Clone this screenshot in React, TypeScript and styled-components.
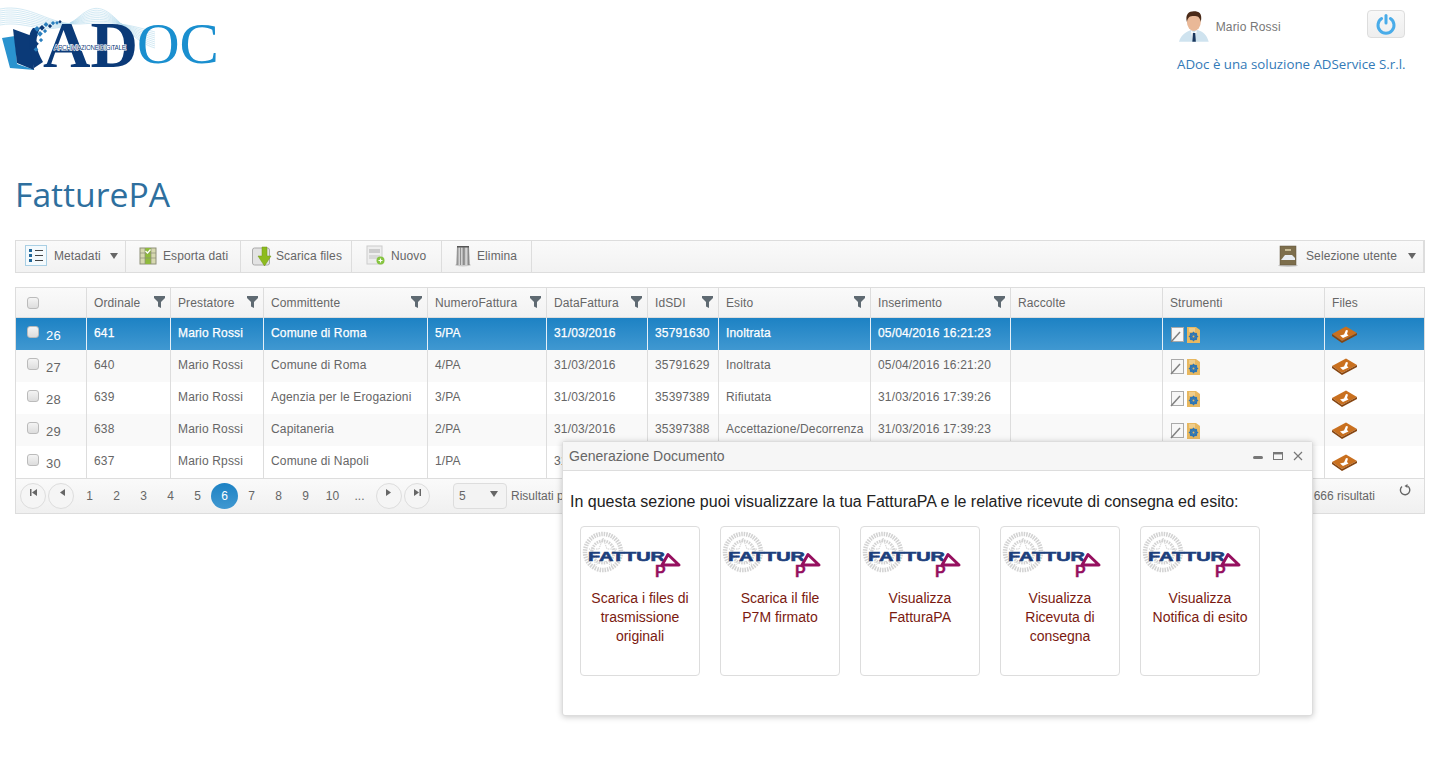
import React from "react";
import styled, { createGlobalStyle } from "styled-components";

const Global = createGlobalStyle`
  html, body { margin: 0; padding: 0; background: #fff; }
  body { font-family: "Liberation Sans", Arial, sans-serif; font-size: 12px; color: #555; overflow: hidden; }
  * { box-sizing: border-box; }
`;

const Page = styled.div`
  position: relative;
  width: 1440px;
  height: 775px;
  overflow: hidden;
  padding: 0 15px 0 15px;
`;

const Header = styled.header`
  display: flex;
  justify-content: space-between;
  margin-left: -15px;
  height: 170px;
`;

const LogoBox = styled.div`
  width: 222px;
  height: 76px;
`;

const UserBox = styled.div`
  width: 228px;
  margin-right: 20px;
  padding-top: 9px;
`;

const UserRow = styled.div`
  display: flex;
  align-items: center;
  height: 34px;
  padding-left: 1px;
`;

const UserName = styled.span`
  margin-left: 6px;
  font-size: 12px;
  letter-spacing: 0.15px;
  color: #777;
  width: 153px;
  position: relative;
  top: 1px;
`;

const PowerButton = styled.button`
  width: 38px;
  height: 28px;
  padding: 0;
  margin-top: -4px;
  display: flex;
  align-items: center;
  justify-content: center;
  border: 1px solid #ddd;
  border-radius: 4px;
  background: linear-gradient(#f8f8f8, #eee);
`;

const Slogan = styled.div`
  margin-top: 9px;
  font-family: "Open Sans", sans-serif;
  font-size: 13.3px;
  line-height: 24px;
  color: #337ab7;
  white-space: nowrap;
`;

const Title = styled.h1`
  margin: 0;
  height: 70px;
  padding-top: 1px;
  font-family: "Open Sans", sans-serif;
  font-weight: 400;
  font-size: 33.7px;
  line-height: 46px;
  color: #2e6f9e;
`;

const Toolbar = styled.div`
  display: flex;
  align-items: stretch;
  width: 1410px;
  height: 33px;
  border: 1px solid #ddd;
  border-right-width: 2px;
  background: linear-gradient(#fafafa, #f2f2f2);
`;

const ToolItem = styled.div<{ $w: number; $pad?: number; $gap?: number; $right?: boolean }>`
  display: flex;
  align-items: center;
  width: ${(p) => p.$w}px;
  padding-left: ${(p) => p.$pad ?? 9}px;
  padding-bottom: 2px;
  gap: ${(p) => p.$gap ?? 6}px;
  font-size: 12px;
  letter-spacing: 0.1px;
  color: #666;
  border-right: ${(p) => (p.$right ? "none" : "1px solid #ddd")};
  margin-left: ${(p) => (p.$right ? "auto" : "0")};
`;

const Caret = styled.span<{ $up?: number }>`
  width: 0;
  height: 0;
  margin-left: 3px;
  margin-top: ${(p) => -(p.$up ?? 0)}px;
  border-left: 4px solid transparent;
  border-right: 4px solid transparent;
  border-top: 6px solid #666;
`;

const Grid = styled.div`
  width: 1410px;
  margin-top: 14px;
  border: 1px solid #ddd;
  border-top-width: 1px;
`;

const Table = styled.table`
  width: 100%;
  table-layout: fixed;
  border-collapse: separate;
  border-spacing: 0;
`;

const Th = styled.th<{ $first?: boolean }>`
  height: 30px;
  padding: 0 7px;
  padding-left: ${(p) => (p.$first ? 11 : 7)}px;
  text-align: left;
  font-weight: 400;
  font-size: 12px;
  letter-spacing: 0.12px;
  color: #666;
  background: linear-gradient(#fafafa, #f2f2f2);
  border-left: 1px solid #ddd;
  border-bottom: 1px solid #ddd;
  position: relative;
  &:first-child { border-left: 0; }
`;

const Row = styled.tr<{ $sel?: boolean; $alt?: boolean }>`
  height: 32px;
  color: ${(p) => (p.$sel ? "#fff" : "#666")};
  background: ${(p) =>
    p.$sel ? "linear-gradient(#1d82c4, #4098d1)" : p.$alt ? "#f9f9f9" : "#fff"};
  -webkit-text-stroke: ${(p) => (p.$sel ? "0.25px #fff" : "0")};
`;

const Td = styled.td<{ $sel?: boolean }>`
  padding: 0 7px 2px;
  font-size: 12px;
  letter-spacing: 0.15px;
  border-left: 1px solid ${(p) => (p.$sel ? "#e6f0f8" : "#ddd")};
  white-space: nowrap;
  overflow: hidden;
  &:first-child { border-left: 0; padding-left: 11px; }
`;

const NumCell = styled.span`
  font-size: 13px;
  margin-left: 7px;
  position: relative;
  top: 2px;
  -webkit-text-stroke: 0;
`;

const Check = styled.span<{ $lift?: number }>`
  display: inline-block;
  position: relative;
  top: ${(p) => -(p.$lift ?? 0)}px;
  width: 12px;
  height: 12px;
  border: 1px solid #bbb;
  border-radius: 3px;
  background: linear-gradient(#f4f4f4, #ddd);
  vertical-align: middle;
`;

const FilterIcon = styled.svg`
  position: absolute;
  right: 5px;
  top: 8px;
`;

const CellIcons = styled.div`
  display: flex;
  gap: 2px;
  align-items: center;
  padding-top: 2px;
`;

const Pager = styled.div`
  position: relative;
  display: flex;
  align-items: center;
  height: 35px;
  padding-left: 4px;
  background: linear-gradient(#fafafa, #f0f0f0);
  border-top: 1px solid #ddd;
  color: #666;
`;

const NavBtn = styled.span<{ $ml?: number }>`
  display: flex;
  align-items: center;
  justify-content: center;
  width: 26px;
  height: 26px;
  margin-left: ${(p) => p.$ml ?? 0}px;
  padding-bottom: 8px;
  border: 1px solid #ddd;
  border-radius: 50%;
  color: #666;
  background: #f5f5f5;
`;

const PageList = styled.div`
  display: flex;
  margin-left: 2px;
`;

const PageNum = styled.span<{ $active?: boolean }>`
  display: flex;
  align-items: center;
  justify-content: center;
  width: 27px;
  height: 26px;
  flex: none;
  font-size: 12px;
  color: ${(p) => (p.$active ? "#fff" : "#666")};
  background: ${(p) => (p.$active ? "linear-gradient(#1d82c4, #4098d1)" : "transparent")};
  border-radius: 50%;
`;

const SizeSelect = styled.span`
  display: flex;
  align-items: center;
  justify-content: space-between;
  width: 54px;
  height: 26px;
  margin-left: 23px;
  padding: 0 8px 0 5px;
  border: 1px solid #ddd;
  border-radius: 4px;
  background: #f3f3f3;
  font-size: 12px;
`;

const PagerText = styled.span`
  margin-left: 4px;
  white-space: nowrap;
`;

const PagerRight = styled.div`
  display: flex;
  align-items: center;
  gap: 24px;
  margin-left: auto;
  padding-right: 13px;
  white-space: nowrap;
`;

const RefreshIcon = styled.svg`
  margin-top: -12px;
`;

const Win = styled.div`
  position: absolute;
  left: 562px;
  top: 441px;
  width: 751px;
  height: 275px;
  background: #fff;
  border: 1px solid #ddd;
  border-radius: 3px;
  box-shadow: 0 1px 6px rgba(0, 0, 0, 0.22);
`;

const WinTitle = styled.div`
  display: flex;
  align-items: center;
  justify-content: space-between;
  height: 29px;
  padding: 0 9px 0 6px;
  background: #f6f6f6;
  border-bottom: 1px solid #ddd;
  font-size: 14px;
  color: #666;
`;

const WinActions = styled.div`
  display: flex;
  align-items: center;
  gap: 10px;
`;

const WinBody = styled.div`
  padding: 21px 7px 0;
`;

const Intro = styled.p`
  margin: 0;
  font-size: 16px;
  line-height: 20px;
  color: #222;
  white-space: nowrap;
`;

const Cards = styled.div`
  display: flex;
  gap: 20px;
  margin: 14px 0 0 10px;
`;

const Card = styled.div`
  width: 120px;
  height: 150px;
  padding-top: 1px;
  border: 1px solid #ddd;
  border-radius: 4px;
  text-align: center;
`;

const CardText = styled.div`
  margin-top: 6px;
  padding: 0 6px;
  font-size: 14px;
  line-height: 19px;
  color: #7b1a10;
`;

const Logo = () => (
  <svg width="222" height="76" viewBox="0 0 222 76">
    <g fill="none" stroke="#a9d5ea" strokeWidth="0.6" opacity="0.85">
      {[0, 2, 4, 6, 8, 10, 12, 14, 16].map((d) => (
        <path key={d} d={`M0 ${9 + d}C30 ${3 + d} 50 ${26 + d} 80 ${24 - d / 2}S120 ${22 + d} 155 ${32 + d}`} />
      ))}
    </g>
    <path d="M2 38L15 36 17 64 35 70 10 68Z" fill="#2a93cf" />
    <path d="M13 29L32 36 34 70 17 63Z" fill="#0b3a78" />
    <path d="M33 28C26 36 30 50 34 68L43 62C36 50 34 40 40 28Z" fill="#0b3a78" />
    {[[35,33,3],[37,26,3],[40,31,3],[42,25,3],[45,29,2],[46,22,2.5],[50,24,2],[53,21,2],[57,21,1.6],[36,41,3],[41,38,2],[36,47,2.4],[60,20,1.4]].map(([x,y,s],i)=>(
      <rect key={i} x={x} y={y} width={s+1} height={s+1} fill={i%3===0?"#0b3a78":"#2a7fbe"} transform={`rotate(45 ${x} ${y})`} />
    ))}
    <text x="137" y="63" fontFamily="Liberation Serif" fontSize="58" fill="#1a8fcf" textLength="82" lengthAdjust="spacingAndGlyphs">OC</text>
    <text x="43" y="67" fontFamily="Liberation Serif" fontWeight="700" fontSize="66" fill="#0b3a78" textLength="95" lengthAdjust="spacingAndGlyphs">AD</text>
    <text x="54" y="50" fontFamily="Liberation Sans" fontSize="6.5" fill="#0b3a78" stroke="#fff" strokeWidth="1.2" paintOrder="stroke" textLength="72">ARCHIVIAZIONE DIGITALE</text>
  </svg>
);

const Avatar = () => (
  <svg width="32" height="34" viewBox="0 0 32 34">
    <path d="M1 33C3 25 9 23 13 21L20 21C25 23 29 25 31 33Z" fill="#cfe3ef" />
    <path d="M13 21L16 24 19 21 17 33 15 33Z" fill="#fff" />
    <path d="M15 24H17.5L18 33H14.5Z" fill="#17365d" />
    <ellipse cx="16" cy="13" rx="7" ry="9" fill="#e9b897" />
    <path d="M9 13C7 5 11 2 16 2S25 4 23 13C22 8 20 7 16 7S10 8 9 13Z" fill="#4a2a18" />
  </svg>
);

const Power = () => (
  <svg width="22" height="22" viewBox="0 0 22 22" fill="none">
    <path d="M6.6 5.6A8 8 0 1 0 15.4 5.6" stroke="#49ace9" strokeWidth="3" strokeLinecap="round" />
    <path d="M11 2.5V10" stroke="#49ace9" strokeWidth="3" strokeLinecap="round" />
  </svg>
);

const IconMeta = () => (
  <svg width="23" height="22" viewBox="0 0 23 22">
    <rect x="0.5" y="0.5" width="21" height="20" fill="#f4fafd" stroke="#a9cfe4" />
    <rect x="4" y="4" width="3" height="3" fill="#22689a" /><rect x="4" y="9" width="3" height="3" fill="#22689a" /><rect x="4" y="14" width="3" height="3" fill="#22689a" />
    <path d="M10 5.5H18M10 10.5H18M10 15.5H18" stroke="#444" strokeWidth="1" />
  </svg>
);
const IconExport = () => (
  <svg width="18" height="18" viewBox="0 0 18 18">
    <rect x="1" y="1" width="16" height="16" fill="#d6d8b0" stroke="#8e9078" />
    <rect x="6" y="1" width="6" height="16" fill="#8fbb3c" />
    <path d="M1 6H17M1 11H17M6 1V17M12 1V17" stroke="#8e9078" strokeWidth="0.7" />
    <path d="M6.5 4L8.5 6 11.5 2.5" stroke="#fff" fill="none" strokeWidth="1.2" />
  </svg>
);
const IconDownload = () => (
  <svg width="21" height="22" viewBox="0 0 21 22">
    <rect x="0.5" y="3" width="17" height="17" rx="2" fill="#e3e3e3" stroke="#aaa" />
    <path d="M10 2H15V11H19L12.5 21 6 11H10Z" fill="#8dbb1f" stroke="#6e9614" strokeWidth="0.5" />
  </svg>
);
const IconNew = () => (
  <svg width="20" height="21" viewBox="0 0 20 21">
    <rect x="1" y="1" width="15" height="18" fill="#eee" stroke="#ccc" />
    <rect x="3" y="4" width="11" height="4" fill="#ccc" /><rect x="3" y="10" width="11" height="4" fill="#d8d8d8" />
    <circle cx="14.5" cy="15.5" r="4" fill="#86c440" />
    <path d="M14.5 13.5V17.5M12.5 15.5H16.5" stroke="#fff" strokeWidth="1.2" />
  </svg>
);
const IconTrash = () => (
  <svg width="18" height="23" viewBox="0 0 18 23">
    <defs>
      <linearGradient id="tub" x1="0" x2="1" y1="0" y2="0">
        <stop offset="0" stopColor="#777" />
        <stop offset="0.3" stopColor="#eee" />
        <stop offset="0.55" stopColor="#999" />
        <stop offset="0.75" stopColor="#ddd" />
        <stop offset="1" stopColor="#666" />
      </linearGradient>
    </defs>
    <ellipse cx="9" cy="21" rx="8" ry="1.5" fill="#ccc" />
    <path d="M3 2H15L15.5 21H2.5Z" fill="url(#tub)" />
    <path d="M3 2H15V3.5H3Z" fill="#555" />
    <path d="M6.5 3V21M10 3V21" stroke="#777" strokeWidth="0.8" />
  </svg>
);
const IconDrawer = () => (
  <svg width="20" height="22" viewBox="0 0 20 22">
    <ellipse cx="10" cy="20.5" rx="10" ry="1.5" fill="#ccc" />
    <rect x="2" y="1" width="16" height="19" fill="#7d6e4c" stroke="#5e5238" strokeWidth="0.5" />
    <rect x="7" y="4" width="6" height="2" fill="#c7bb95" />
    <path d="M3 15L7 10H14L17 13V15Z" fill="#e9edf2" />
  </svg>
);
const Filter = () => (
  <FilterIcon width="11" height="12" viewBox="0 0 11 12">
    <path d="M0 0H11V2L7 6V12L4 10.5V6L0 2Z" fill="#5f6a72" />
  </FilterIcon>
);
const IconEdit = () => (
  <svg width="15" height="17" viewBox="0 0 15 17">
    <rect x="1.5" y="1.5" width="12" height="14" fill="#f7f7f7" stroke="#aaa" />
    <path d="M1 16L10 6" stroke="#808080" strokeWidth="1.5" />
  </svg>
);
const IconGear = () => (
  <svg width="13" height="17" viewBox="0 0 13 17">
    <path d="M0 1H9L13 4V17H0Z" fill="#e8b860" />
    <path d="M2 3H8M2 5H8" stroke="#f6e2b5" />
    <circle cx="6.5" cy="10.5" r="3" fill="none" stroke="#2c75b5" strokeWidth="2" />
    <path d="M6.5 5.8V15.2M1.8 10.5H11.2M3.2 7.2L9.8 13.8M9.8 7.2L3.2 13.8" stroke="#2c75b5" strokeWidth="1.1" />
    <circle cx="6.5" cy="10.5" r="1" fill="#e8b860" />
  </svg>
);
const IconFiles = () => (
  <svg width="25" height="17" viewBox="0 0 25 17">
    <path d="M0 8L14 0.5 25 7 10 15Z" fill="#c9701f" />
    <path d="M0 8L10 15 25 7V9L10 17 0 10Z" fill="#864510" />
    <path d="M8 9.5L12 8.5 14 4 16 4.5 15 8 16.5 9.5 11 12Z" fill="#fff" />
  </svg>
);
const NavGlyph = ({ dir, bar }: { dir: "l" | "r"; bar?: boolean }) => (
  <svg width="9" height="9" viewBox="0 0 9 9" fill="#666">
    {dir === "l" ? <path d="M8 1V8L3 4.5Z" /> : <path d="M1 1V8L6 4.5Z" />}
    {bar && (dir === "l" ? <rect x="1" y="1" width="1.5" height="7" /> : <rect x="6.5" y="1" width="1.5" height="7" />)}
  </svg>
);
const FatturaLogo = () => (
  <svg width="116" height="52" viewBox="0 0 116 52">
    <g fill="none" stroke="#d2d2d2" strokeDasharray="1.5 1">
      <circle cx="21" cy="24" r="18" strokeWidth="4.5" />
      <circle cx="21" cy="24" r="11" strokeWidth="3" />
      <path d="M21 10L25 21H35L27 28 30 38 21 32 12 38 15 28 7 21H17Z" strokeWidth="1" />
    </g>
    <text x="6" y="33" fontFamily="Liberation Sans" fontWeight="700" fontSize="13" fill="#1c3f7c" stroke="#1c3f7c" strokeWidth="0.6" textLength="77" lengthAdjust="spacingAndGlyphs">FATTUR</text>
    <path d="M80 37L86 26.5 97 37Z" fill="none" stroke="#95105f" strokeWidth="3" strokeLinejoin="round" />
    <text x="73" y="49" fontFamily="Liberation Sans" fontWeight="700" fontSize="16" fill="#95105f" stroke="#95105f" strokeWidth="0.3">P</text>
  </svg>
);

const columns = [70, 84, 93, 164, 119, 101, 71, 152, 140, 152, 162, 100];
const headers = ["", "Ordinale", "Prestatore", "Committente", "NumeroFattura", "DataFattura", "IdSDI", "Esito", "Inserimento", "Raccolte", "Strumenti", "Files"];
const rows = [
  ["26", "641", "Mario Rossi", "Comune di Roma", "5/PA", "31/03/2016", "35791630", "Inoltrata", "05/04/2016 16:21:23"],
  ["27", "640", "Mario Rossi", "Comune di Roma", "4/PA", "31/03/2016", "35791629", "Inoltrata", "05/04/2016 16:21:20"],
  ["28", "639", "Mario Rossi", "Agenzia per le Erogazioni", "3/PA", "31/03/2016", "35397389", "Rifiutata", "31/03/2016 17:39:26"],
  ["29", "638", "Mario Rossi", "Capitaneria", "2/PA", "31/03/2016", "35397388", "Accettazione/Decorrenza", "31/03/2016 17:39:23"],
  ["30", "637", "Mario Rpssi", "Comune di Napoli", "1/PA", "31/03/2016", "35397387", "Inoltrata", "31/03/2016 17:39:20"],
];
const cards = [
  ["Scarica i files di", "trasmissione", "originali"],
  ["Scarica il file", "P7M firmato"],
  ["Visualizza", "FatturaPA"],
  ["Visualizza", "Ricevuta di", "consegna"],
  ["Visualizza", "Notifica di esito"],
];

export default function App() {
  return (
    <Page>
      <Global />
      <Header>
        <LogoBox><Logo /></LogoBox>
        <UserBox>
          <UserRow>
            <Avatar />
            <UserName>Mario Rossi</UserName>
            <PowerButton aria-label="Esci"><Power /></PowerButton>
          </UserRow>
          <Slogan>ADoc è una soluzione ADService S.r.l.</Slogan>
        </UserBox>
      </Header>
      <Title>FatturePA</Title>
      <Toolbar>
        <ToolItem $w={110}><IconMeta />Metadati<Caret /></ToolItem>
        <ToolItem $w={115} $pad={13}><IconExport />Esporta dati</ToolItem>
        <ToolItem $w={111} $pad={11} $gap={3}><IconDownload />Scarica files</ToolItem>
        <ToolItem $w={90} $pad={14} $gap={5}><IconNew />Nuovo</ToolItem>
        <ToolItem $w={90} $pad={12} $gap={5}><IconTrash />Elimina</ToolItem>
        <ToolItem $w={145} $right $pad={0} $gap={8}><IconDrawer />Selezione utente<Caret /></ToolItem>
      </Toolbar>
      <Grid>
        <Table>
          <colgroup>{columns.map((w, i) => <col key={i} style={{ width: w }} />)}</colgroup>
          <thead>
            <tr>
              {headers.map((h, i) => (
                <Th key={i} $first={i === 0}>
                  {i === 0 ? <Check /> : h}
                  {i >= 1 && i <= 8 && <Filter />}
                </Th>
              ))}
            </tr>
          </thead>
          <tbody>
            {rows.map((r, ri) => {
              const sel = ri === 0;
              return (
                <Row key={r[0]} $sel={sel} $alt={ri % 2 === 1}>
                  <Td><Check $lift={2} /><NumCell>{r[0]}</NumCell></Td>
                  {r.slice(1).map((c, ci) => <Td key={ci} $sel={sel}>{c}</Td>)}
                  <Td $sel={sel} />
                  <Td $sel={sel}><CellIcons><IconEdit /><IconGear /></CellIcons></Td>
                  <Td $sel={sel}><CellIcons><IconFiles /></CellIcons></Td>
                </Row>
              );
            })}
          </tbody>
        </Table>
        <Pager>
          <NavBtn><NavGlyph dir="l" bar /></NavBtn>
          <NavBtn $ml={2}><NavGlyph dir="l" /></NavBtn>
          <PageList>
            {["1", "2", "3", "4", "5", "6", "7", "8", "9", "10", "..."].map((n) => (
              <PageNum key={n} $active={n === "6"}>{n}</PageNum>
            ))}
          </PageList>
          <NavBtn $ml={3}><NavGlyph dir="r" /></NavBtn>
          <NavBtn $ml={2}><NavGlyph dir="r" bar /></NavBtn>
          <SizeSelect>5<Caret $up={5} /></SizeSelect>
          <PagerText>Risultati per pagina</PagerText>
          <PagerRight>
            <span>26 - 30 di 666 risultati</span>
            <RefreshIcon width="12" height="12" viewBox="0 0 12 12" fill="none">
              <path d="M3 2.5A4.7 4.7 0 1 0 8.5 2" stroke="#666" strokeWidth="1.4" />
              <path d="M6.5 0V4L3.5 2Z" fill="#666" transform="translate(2 0)" />
            </RefreshIcon>
          </PagerRight>
        </Pager>
      </Grid>
      <Win>
        <WinTitle>
          Generazione Documento
          <WinActions>
            <svg width="10" height="10" viewBox="0 0 10 10"><rect x="0" y="5" width="10" height="3" rx="1.5" fill="#777" /></svg>
            <svg width="10" height="10" viewBox="0 0 10 10"><rect x="0.5" y="1.5" width="9" height="7" fill="none" stroke="#777" /><rect x="0" y="1" width="10" height="2.4" fill="#777" /></svg>
            <svg width="10" height="10" viewBox="0 0 10 10"><path d="M1 1L9 9M9 1L1 9" stroke="#777" strokeWidth="1.2" /></svg>
          </WinActions>
        </WinTitle>
        <WinBody>
          <Intro>In questa sezione puoi visualizzare la tua FatturaPA e le relative ricevute di consegna ed esito:</Intro>
          <Cards>
            {cards.map((lines, i) => (
              <Card key={i}>
                <FatturaLogo />
                <CardText>{lines.map((l) => <div key={l}>{l}</div>)}</CardText>
              </Card>
            ))}
          </Cards>
        </WinBody>
      </Win>
    </Page>
  );
}
